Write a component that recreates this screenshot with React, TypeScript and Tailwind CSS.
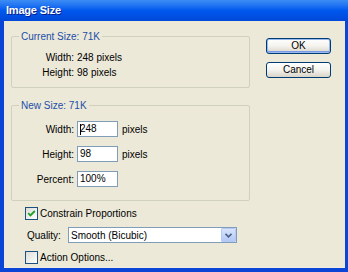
import React from "react";

function Check({ checked }: { checked: boolean }) {
  return (
    <div className="w-[13px] h-[13px] border border-[#1C5180] bg-gradient-to-br from-[#DCDCD7] to-white flex items-center justify-center shrink-0">
      {checked && (
        <svg width="9" height="9" viewBox="0 0 9 9">
          <path d="M1.2 4.2 L3.4 6.4 L7.8 2" fill="none" stroke="#21A121" strokeWidth="1.8" />
        </svg>
      )}
    </div>
  );
}

function Row({ label, children }: { label: string; children: React.ReactNode }) {
  return (
    <div className="flex items-center">
      <div className="w-[62px] text-right">{label}</div>
      <div className="ml-[3px] flex items-center">{children}</div>
    </div>
  );
}

function Input({ value, caret }: { value: string; caret?: boolean }) {
  return (
    <div className="w-[41px] h-[16px] bg-white border border-[#7F9DB9] flex items-center pl-[2px] leading-none">
      {caret && <span className="w-px h-[11px] bg-black -mr-[1px]" />}
      {value}
    </div>
  );
}

function Btn({ label, def }: { label: string; def?: boolean }) {
  return (
    <div
      className={
        "w-[65px] h-[16px] rounded-[3px] border border-[#003C74] bg-gradient-to-b from-white via-[#F4F3EE] to-[#D9D4C8] flex items-center justify-center leading-none " +
        (def ? "shadow-[inset_0_0_0_1px_#98B8F0,inset_0_-1px_0_1px_#7A9AE6]" : "")
      }
    >
      {label}
    </div>
  );
}

export default function App() {
  return (
    <div className="w-[348px] h-[272px] flex flex-col bg-[#0A45D6] font-['Liberation_Sans',sans-serif] text-[10px] text-black">
      <div className="h-[21px] shrink-0 bg-gradient-to-b from-[#3D8DF5] via-[#0058EE] to-[#0048D8] flex items-center px-[6px] pb-[1px]">
        <span className="text-white font-bold text-[11px] tracking-[-0.2px] [text-shadow:1px_1px_0_#0A1E8C]">Image Size</span>
      </div>
      <div className="flex-1 ml-[4px] mr-[3px] mb-[4px] bg-[#ECE9D8] flex border-b border-[#F0EEE4]">
        <div className="w-[246px] pl-[7px] flex flex-col">
          <fieldset className="mt-[9px] w-[239px] border border-[#D0D0BF] rounded-[2px] px-0 pt-[7px] pb-[7px]">
            <legend className="ml-[7px] px-[2px] text-[#1D4EA8] leading-[13px]">Current Size: 71K</legend>
            <div className="leading-[15px]">
              <Row label="Width:">248 pixels</Row>
              <Row label="Height:">98 pixels</Row>
            </div>
          </fieldset>
          <fieldset className="mt-[11px] w-[239px] border border-[#D0D0BF] rounded-[2px] px-0 pt-[9px] pb-[13px]">
            <legend className="ml-[7px] px-[2px] text-[#1D4EA8] leading-[13px]">New Size: 71K</legend>
            <div className="flex flex-col gap-[9px]">
              <Row label="Width:">
                <Input value="248" caret />
                <span className="ml-[4px]">pixels</span>
              </Row>
              <Row label="Height:">
                <Input value="98" />
                <span className="ml-[4px]">pixels</span>
              </Row>
              <Row label="Percent:">
                <Input value="100%" />
              </Row>
            </div>
          </fieldset>
          <div className="mt-[6px] ml-[14px] flex items-center h-[13px]">
            <Check checked />
            <span className="ml-[2px]">Constrain Proportions</span>
          </div>
          <div className="mt-[7px] flex items-center h-[16px]">
            <span className="ml-[16px] w-[41px]">Quality:</span>
            <div className="w-[169px] h-[16px] bg-white border border-[#7F9DB9] flex items-center justify-between">
              <span className="pl-[2px]">Smooth (Bicubic)</span>
              <div className="w-[15px] h-[14px] bg-gradient-to-b from-[#D8E3FC] to-[#B4C8F6] border border-[#B5C9F4] rounded-[1px] flex items-center justify-center">
                <svg width="7" height="5" viewBox="0 0 7 5">
                  <path d="M0.5 0.8 L3.5 3.8 L6.5 0.8" fill="none" stroke="#4D6185" strokeWidth="1.6" />
                </svg>
              </div>
            </div>
          </div>
          <div className="mt-[8px] ml-[14px] flex items-center h-[13px]">
            <Check checked={false} />
            <span className="ml-[2px]">Action Options...</span>
          </div>
        </div>
        <div className="ml-[16px] mt-[17px] flex flex-col gap-[8px]">
          <Btn label="OK" def />
          <Btn label="Cancel" />
        </div>
      </div>
    </div>
  );
}
